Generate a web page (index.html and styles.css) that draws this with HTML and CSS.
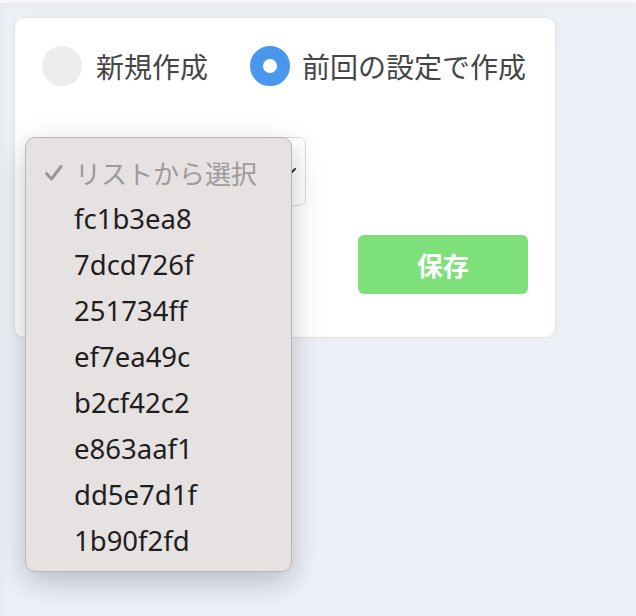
FILE: index.html
```html
<!DOCTYPE html>
<html lang="ja">
<head>
<meta charset="utf-8">
<link rel="stylesheet" href="styles.css">
</head>
<body>
<div class="topbar"></div>
<div class="page">
  <div class="card">
    <div class="radios">
      <label class="radio"><span class="dot"></span><span class="label">新規作成</span></label>
      <label class="radio"><span class="dot checked"></span><span class="label">前回の設定で作成</span></label>
    </div>
    <div class="select-wrap">
      <div class="select">
        <svg class="chev" width="14" height="10" viewBox="0 0 14 10"><path d="M2 2 L7 7 L12 2" fill="none" stroke="#333" stroke-width="2" stroke-linecap="round"/></svg>
      </div>
      <div class="menu">
        <div class="item head"><svg class="check" width="20" height="18" viewBox="0 0 20 18"><path d="M2.5 9.5 L7.5 15 L17 2.5" fill="none" stroke="#979595" stroke-width="3" stroke-linecap="round" stroke-linejoin="round"/></svg><span>リストから選択</span></div>
        <div class="item">fc1b3ea8</div>
        <div class="item">7dcd726f</div>
        <div class="item">251734ff</div>
        <div class="item">ef7ea49c</div>
        <div class="item">b2cf42c2</div>
        <div class="item">e863aaf1</div>
        <div class="item">dd5e7d1f</div>
        <div class="item">1b90f2fd</div>
      </div>
    </div>
    <div class="actions">
      <button class="save">保存</button>
    </div>
  </div>
</div>
</body>
</html>
```
FILE: styles.css
```css
html, body {
  margin: 0;
  padding: 0;
}
body {
  background: #eef0f8;
  font-family: "Noto Sans CJK JP", "Noto Sans", sans-serif;
  width: 636px;
  height: 616px;
  overflow: hidden;
  box-shadow: inset 10px 0 10px -8px rgba(0,0,0,0.04);
}
.topbar {
  height: 3px;
  background: #f6f6f8;
  box-shadow: 0 2px 6px rgba(0,0,0,0.06);
}
.page {
  padding: 14px 0 0 14px;
}
.card {
  width: 540px;
  height: 319px;
  background: #fff;
  border: 1px solid #e3e3e6;
  border-radius: 10px;
  box-shadow: 0 0 10px rgba(0,0,0,0.03);
  box-sizing: content-box;
  display: flex;
  flex-direction: column;
}
.radios {
  display: flex;
  align-items: center;
  margin: 28px 0 0 27px;
  height: 40px;
}
.radio {
  display: flex;
  align-items: center;
  margin-right: 42px;
  white-space: nowrap;
  flex: none;
}
.dot {
  width: 40px;
  height: 40px;
  border-radius: 50%;
  background: #ededed;
  box-sizing: border-box;
  margin-right: 14px;
  flex: none;
}
.dot.checked {
  background: #fff;
  border: 13px solid #4a97ee;
  margin-right: 12px;
}
.label {
  font-size: 28px;
  color: #454545;
  line-height: 40px;
}
.select-wrap {
  position: relative;
  margin: 51px 0 0 32px;
  width: 259px;
  height: 69px;
}
.select {
  width: 259px;
  height: 69px;
  border: 1px solid #dcdcdc;
  border-radius: 7px;
  box-sizing: border-box;
  background: #fff;
  position: relative;
}
.chev {
  position: absolute;
  right: 8px;
  top: 29px;
}
.menu {
  position: absolute;
  left: -22px;
  top: 0;
  width: 267px;
  height: 435px;
  box-sizing: border-box;
  background: #e6e2e2;
  border: 1px solid #b9b6b6;
  border-radius: 10px;
  box-shadow: 0 10px 30px rgba(0,0,0,0.22);
  padding: 12px 0 0 0;
  z-index: 5;
}
.item {
  height: 46px;
  line-height: 46px;
  font-family: "Noto Sans", "Noto Sans CJK JP", sans-serif;
  font-size: 27.5px;
  color: #1e1e1e;
  padding-left: 48px;
}
.item.head {
  padding-left: 18px;
  display: flex;
  align-items: center;
  color: #9c9a9a;
  font-size: 26px;
  font-family: "Noto Sans CJK JP", sans-serif;
}
.check {
  margin-right: 11px;
}
.actions {
  display: flex;
  justify-content: flex-end;
  margin: 29px 27px 0 0;
}
.save {
  width: 170px;
  height: 59px;
  border: none;
  border-radius: 6px;
  background: #7ee07a;
  color: #fff;
  font-family: "Noto Sans CJK JP", sans-serif;
  font-weight: 700;
  font-size: 26px;
  padding: 0;
}
```
